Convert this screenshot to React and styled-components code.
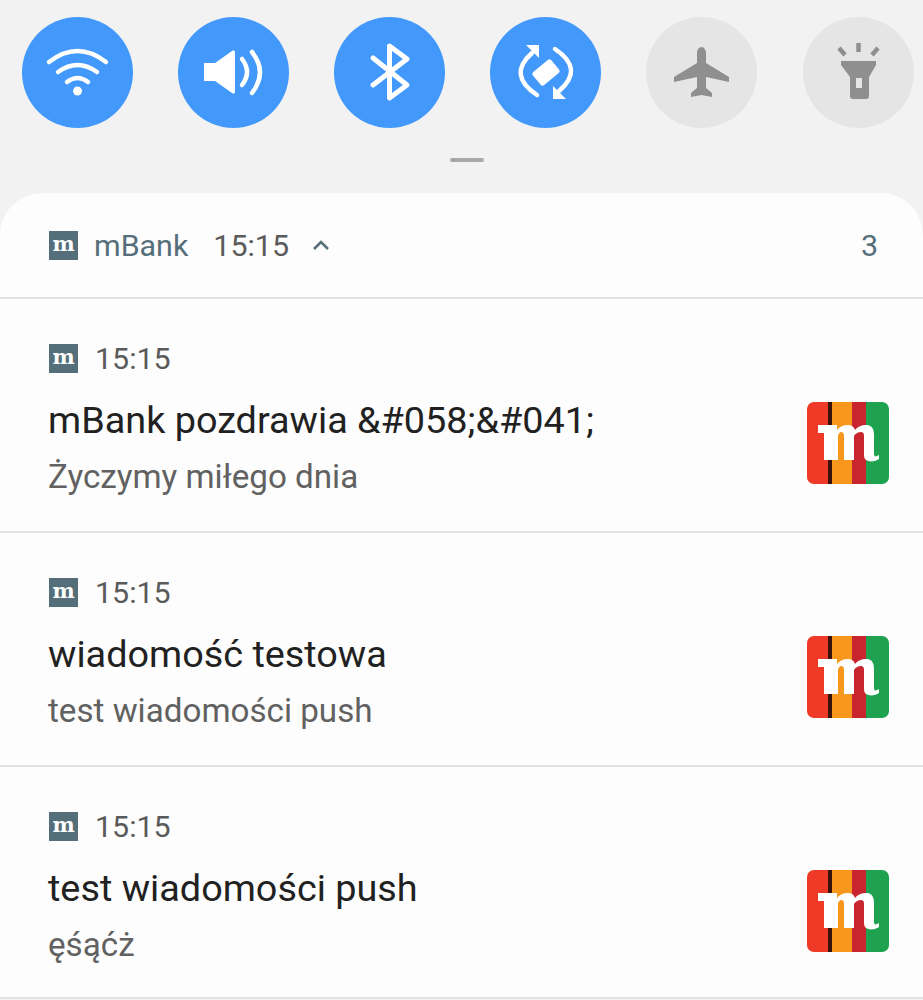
import React from 'react';
import styled, { createGlobalStyle } from 'styled-components';

const GlobalStyle = createGlobalStyle`
  html, body {
    margin: 0;
    padding: 0;
    background: #f2f2f2;
    font-family: Roboto, "Liberation Sans", sans-serif;
  }
`;

const Screen = styled.div`
  width: 923px;
  height: 1000px;
  overflow: hidden;
  background: #f2f2f2;
`;

const TileRow = styled.div`
  display: flex;
  gap: 45px;
  padding: 17px 0 0 22px;
`;

const Tile = styled.div`
  flex: none;
  width: 111px;
  height: 111px;
  border-radius: 50%;
  background: ${(p) => (p.$active ? '#4399fb' : '#e5e5e5')};
  color: ${(p) => (p.$active ? '#ffffff' : '#8f8f8f')};
  &:last-child {
    margin-left: 1px;
  }
  svg {
    display: block;
  }
`;

const Handle = styled.div`
  width: 34px;
  height: 4px;
  margin: 30px 0 31px 450px;
  border-radius: 2px;
  background: #a8a8a8;
`;

const Sheet = styled.div`
  background: #fdfdfd;
  border-radius: 42px 42px 0 0;
`;

const GroupHeader = styled.div`
  display: flex;
  align-items: center;
  height: 104px;
  padding: 0 45px 0 49px;
  border-bottom: 2px solid #e3e3e3;
`;

const AppBadge = styled.span`
  display: flex;
  align-items: center;
  justify-content: center;
  width: 29px;
  height: 29px;
  background: #546e7a;
  color: #ffffff;
  font-family: "DejaVu Serif", "Liberation Serif", serif;
  font-weight: 700;
  font-size: 21px;
  line-height: 25px;
  padding-bottom: 4px;
  box-sizing: border-box;
`;

const AppName = styled.span`
  margin-left: 16px;
  font-size: 30.4px;
  color: #546e7a;
`;

const Time = styled.span`
  margin-left: ${(p) => p.$gap}px;
  font-size: 30.4px;
  color: #5a5a5a;
`;

const Chevron = styled.svg`
  margin-left: 22px;
  width: 20px;
  height: 14px;
  color: #546e7a;
`;

const Count = styled.span`
  margin-left: auto;
  font-size: 30.4px;
  color: #546e7a;
`;

const Notification = styled.div`
  display: flex;
  justify-content: space-between;
  align-items: flex-start;
  box-sizing: border-box;
  height: ${(p) => p.$height}px;
  padding: 45px 34px 0 48px;
  border-bottom: 2px solid #e3e3e3;
`;

const Content = styled.div`
  display: flex;
  flex-direction: column;
`;

const MetaRow = styled.div`
  display: flex;
  align-items: center;
  height: 29px;
  margin-left: 1px;
`;

const Title = styled.div`
  margin-top: 24px;
  font-size: 37.8px;
  line-height: 46px;
  color: #212121;
`;

const Body = styled.div`
  margin-top: 14px;
  font-size: 33.2px;
  line-height: 40px;
  color: #616161;
`;

const AppLogo = styled.svg`
  display: block;
  flex: none;
  width: 82px;
  height: 82px;
  margin-top: 58px;
  border-radius: 7px;
  background: linear-gradient(
    90deg,
    #ee3a26 0 21px,
    #3a120c 21px 25px,
    #f7981d 25px 45px,
    #c9252f 45px 59px,
    #1fa24f 59px 82px
  );
`;

const Glyph = ({ children }) => (
  <svg width="111" height="111" viewBox="0 0 111 111">
    {children}
  </svg>
);

const WifiIcon = () => (
  <Glyph>
    <g fill="none" stroke="currentColor" strokeWidth="4.5" strokeLinecap="round">
      <path d="M27 45Q55.5 23 84 45" />
      <path d="M36 55Q55.5 41 75 55" />
      <path d="M45 65Q55.5 57 66 65" />
    </g>
    <circle cx="55.5" cy="74" r="4.5" fill="currentColor" />
  </Glyph>
);

const VolumeIcon = () => (
  <Glyph>
    <path
      d="M26 46H37L54 34Q57 32 57 36V74Q57 78 54 76L37 64H26Z"
      fill="currentColor"
    />
    <g fill="none" stroke="currentColor" strokeWidth="4.5" strokeLinecap="round">
      <path d="M64 42Q74 55 64 68" />
      <path d="M74 35Q90 55 74 76" />
    </g>
  </Glyph>
);

const BluetoothIcon = () => (
  <Glyph>
    <path
      d="M39 41L73 68L55.5 81V29L73 42L39 68"
      fill="none"
      stroke="currentColor"
      strokeWidth="5"
      strokeLinecap="round"
      strokeLinejoin="round"
    />
  </Glyph>
);

const RotationIcon = () => (
  <Glyph>
    <rect
      x="44"
      y="47"
      width="24"
      height="17"
      rx="2.5"
      transform="rotate(-40 56 55.5)"
      fill="currentColor"
    />
    <g fill="none" stroke="currentColor" strokeWidth="4.5" strokeLinecap="round">
      <path d="M42 36Q17 58 47 78" />
      <path d="M65 32Q95 52 69 74" />
    </g>
    <path d="M36 28H49V41Z" fill="currentColor" />
    <path d="M63 69V82H76Z" fill="currentColor" />
  </Glyph>
);

const PlaneIcon = () => (
  <Glyph>
    <path
      d="M55.5 30C58 30 60 33 60 36V46L83 60V65L60 60V71L66 76V80L55.5 78L45 80V76L51 71V60L28 65V60L51 46V36C51 33 53 30 55.5 30Z"
      fill="currentColor"
    />
  </Glyph>
);

const FlashlightIcon = () => (
  <Glyph>
    <path
      fillRule="evenodd"
      d="M38 44H73V48L66 60V79Q66 82 63 82H50Q47 82 47 79V60L38 48ZM53 61V71H59V61Z"
      fill="currentColor"
    />
    <g stroke="currentColor" strokeWidth="4.5">
      <path d="M55.5 26V35" />
      <path d="M36 31L42 38" />
      <path d="M75 31L69 38" />
    </g>
  </Glyph>
);

const logoMark =
  'M11 23H30V28C33 24 38 22.5 42 23C45 23.5 47 25 48 28C51 24 56 22.5 60 23C65 23.5 67 27 67 33V52C67 55 69 55 72 53V57C68 60 62 60 59 58C57 56.5 57 54 57 52V34C57 31 56 30 54 30C51 30 48 32 47 34V58H37V34C37 31 36 30 34 30C33 30 31 32 31 34V58H17V31H11Z';

const tiles = [
  { icon: WifiIcon, active: true },
  { icon: VolumeIcon, active: true },
  { icon: BluetoothIcon, active: true },
  { icon: RotationIcon, active: true },
  { icon: PlaneIcon, active: false },
  { icon: FlashlightIcon, active: false },
];

const notifications = [
  { title: 'mBank pozdrawia &#058;&#041;', body: 'Życzymy miłego dnia', height: 234 },
  { title: 'wiadomość testowa', body: 'test wiadomości push', height: 234 },
  { title: 'test wiadomości push', body: 'ęśąćż', height: 232 },
];

export default function App() {
  return (
    <Screen>
      <GlobalStyle />
      <TileRow>
        {tiles.map((tile, index) => (
          <Tile key={index} $active={tile.active}>
            <tile.icon />
          </Tile>
        ))}
      </TileRow>
      <Handle />
      <Sheet>
        <GroupHeader>
          <AppBadge>m</AppBadge>
          <AppName>mBank</AppName>
          <Time $gap={25}>15:15</Time>
          <Chevron viewBox="0 0 20 14">
            <path
              d="M3 11L10 4L17 11"
              fill="none"
              stroke="currentColor"
              strokeWidth="2.6"
            />
          </Chevron>
          <Count>3</Count>
        </GroupHeader>
        {notifications.map((item, index) => (
          <Notification key={index} $height={item.height}>
            <Content>
              <MetaRow>
                <AppBadge>m</AppBadge>
                <Time $gap={17}>15:15</Time>
              </MetaRow>
              <Title>{item.title}</Title>
              <Body>{item.body}</Body>
            </Content>
            <AppLogo viewBox="0 0 82 82">
              <path d={logoMark} fill="#ffffff" />
            </AppLogo>
          </Notification>
        ))}
      </Sheet>
    </Screen>
  );
}
